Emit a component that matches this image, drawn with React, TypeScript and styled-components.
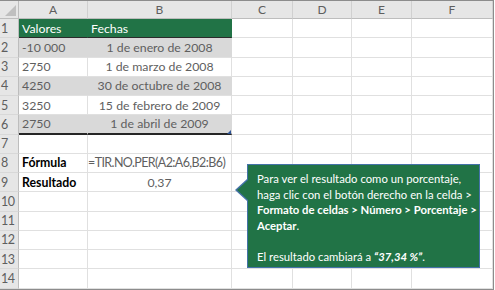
import { Fragment } from "react";
import styled, { createGlobalStyle } from "styled-components";

const GlobalStyle = createGlobalStyle`
    html, body {
        margin: 0;
        padding: 0;
        background: #ffffff;
    }
    body {
        font-family: Lato, "Open Sans", "Liberation Sans", sans-serif;
    }
`;

const Frame = styled.div`
    position: relative;
    width: 493px;
    border: 1px solid #8c8c8c;
    border-left: none;
    background: #ffffff;
    overflow: hidden;
`;

const Sheet = styled.div`
    display: grid;
    grid-template-columns: 19px 69px 144px 61px 59px 60px 81px;
    grid-template-rows: 18px repeat(14, 19.25px);
`;

const Corner = styled.div`
    position: relative;
    background: #e6e6e6;
    border-right: 1px solid #bdbdbd;
    border-bottom: 1px solid #bdbdbd;
    &::after {
        content: "";
        position: absolute;
        right: 2px;
        bottom: 2px;
        border-style: solid;
        border-width: 0 0 11px 11px;
        border-color: transparent transparent #bfbfbf transparent;
    }
`;

const ColHead = styled.div`
    background: #e6e6e6;
    border-right: 1px solid #d0d0d0;
    border-bottom: 1px solid #bdbdbd;
    color: #5e5e5e;
    font-size: 12px;
    display: flex;
    align-items: center;
    justify-content: center;
`;

const RowHead = styled.div`
    background: #e6e6e6;
    border-right: 1px solid #bdbdbd;
    border-bottom: 1px solid #d8d8d8;
    color: #5e5e5e;
    font-size: 12.5px;
    display: flex;
    align-items: center;
    padding-left: 1px;
    overflow: hidden;
    white-space: nowrap;
    letter-spacing: -0.5px;
`;

const Cell = styled.div<{ $bg?: string; $align?: string; $color?: string; $bold?: boolean; $under?: string; $tight?: boolean }>`
    position: relative;
    background: ${(p) => p.$bg || "#ffffff"};
    border-right: 1px solid ${(p) => (p.$bg ? p.$bg : "#e0e0e0")};
    border-bottom: ${(p) => p.$under || "1px solid #e0e0e0"};
    color: ${(p) => p.$color || "#5f5f5f"};
    font-weight: ${(p) => (p.$bold ? 700 : 400)};
    font-size: ${(p) => (p.$tight ? "12.5px" : "12.3px")};
    letter-spacing: ${(p) => (p.$tight ? "-0.6px" : "normal")};
    display: flex;
    align-items: center;
    justify-content: ${(p) => p.$align || "flex-start"};
    padding: 0 ${(p) => (p.$tight ? "0" : "3px")};
    white-space: nowrap;
    box-sizing: border-box;
    min-width: 0;
`;

const ResizeHandle = styled.span`
    position: absolute;
    right: 0;
    bottom: -1px;
    border-style: solid;
    border-width: 0 0 4px 4px;
    border-color: transparent transparent #2f5597 transparent;
`;

const Callout = styled.div`
    position: absolute;
    left: 247px;
    top: 163px;
    width: 233px;
    height: 104px;
    box-sizing: border-box;
    background: #217346;
    border: 1px solid #4472a8;
    color: #ffffff;
    font-size: 11.3px;
    line-height: 15.5px;
    padding: 6px 2px 0 9px;
    white-space: nowrap;
    &::before {
        content: "";
        position: absolute;
        left: -13px;
        top: 14px;
        border-style: solid;
        border-width: 11px 12px 11px 0;
        border-color: transparent #4472a8 transparent transparent;
    }
    &::after {
        content: "";
        position: absolute;
        left: -11px;
        top: 15px;
        border-style: solid;
        border-width: 10px 11px 10px 0;
        border-color: transparent #217346 transparent transparent;
    }
`;

const Para = styled.p`
    margin: 0 0 15.5px;
`;

const columns = ["A", "B", "C", "D", "E", "F"];

const GREEN = "#217346";
const GRAY = "#d9d9d9";

interface IRow {
    a?: string;
    b?: string;
    bg?: string;
    bAlign?: string;
    color?: string;
    boldA?: boolean;
    under?: string;
    handle?: boolean;
    tight?: boolean;
}

const rows: IRow[] = [
    { a: "Valores", b: "Fechas", bg: GREEN, bAlign: "flex-start", color: "#ffffff", under: "1px solid #2b2b2b" },
    { a: "-10 000", b: "1 de enero de 2008", bg: GRAY },
    { a: "2750", b: "1 de marzo de 2008" },
    { a: "4250", b: "30 de octubre de 2008", bg: GRAY },
    { a: "3250", b: "15 de febrero de 2009" },
    { a: "2750", b: "1 de abril de 2009", bg: GRAY, under: "2px solid #262626", handle: true },
    {},
    { a: "Fórmula", b: "=TIR.NO.PER(A2:A6,B2:B6)", bAlign: "flex-start", boldA: true, tight: true },
    { a: "Resultado", b: "0,37", boldA: true },
    {},
    {},
    {},
    {},
    {},
];

function App() {
    return (
        <>
            <GlobalStyle />
            <Frame>
                <Sheet>
                    <Corner />
                    {columns.map((c) => (
                        <ColHead key={c}>{c}</ColHead>
                    ))}
                    {rows.map((row, i) => (
                        <Fragment key={i}>
                            <RowHead>{i + 1}</RowHead>
                            <Cell
                                $bg={row.bg}
                                $under={row.under}
                                $bold={row.boldA}
                                $color={row.boldA ? "#000000" : row.color}
                            >
                                {row.a}
                            </Cell>
                            <Cell
                                $bg={row.bg}
                                $under={row.under}
                                $align={row.bAlign || "center"}
                                $color={row.color}
                                $tight={row.tight}
                            >
                                {row.b}
                                {row.handle && <ResizeHandle />}
                            </Cell>
                            <Cell />
                            <Cell />
                            <Cell />
                            <Cell />
                        </Fragment>
                    ))}
                </Sheet>
                <Callout>
                    <Para>
                        Para ver el resultado como un porcentaje,
                        <br />
                        haga clic con el botón derecho en la celda &gt;
                        <br />
                        <b>Formato de celdas &gt; Número &gt; Porcentaje &gt;</b>
                        <br />
                        <b>Aceptar</b>.
                    </Para>
                    <Para>
                        El resultado cambiará a <b><i>“37,34 %”</i></b>.
                    </Para>
                </Callout>
            </Frame>
        </>
    );
}

export default App;
